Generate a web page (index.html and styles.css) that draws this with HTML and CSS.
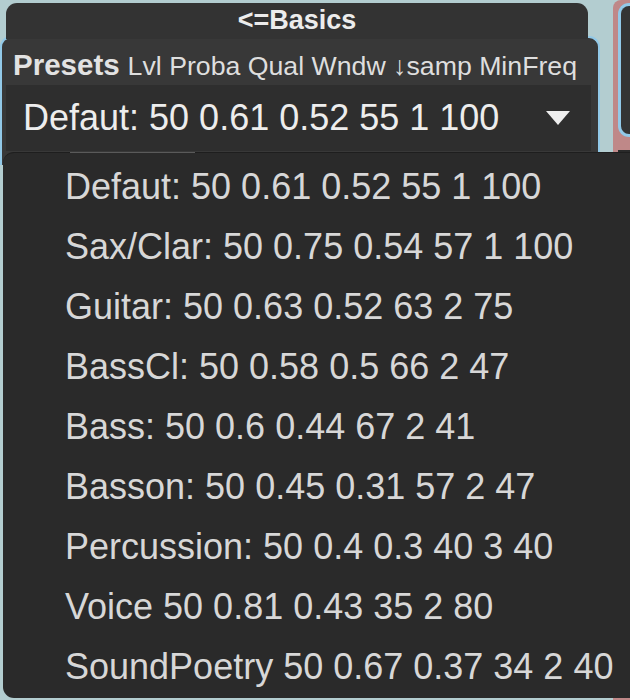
FILE: index.html
```html
<!DOCTYPE html>
<html>
<head>
<meta charset="utf-8">
<link rel="stylesheet" href="styles.css">
</head>
<body>
<div class="stage">
  <div class="main">
    <div class="tab">&lt;=Basics</div>
    <div class="panel">
      <div class="header"><span class="title">Presets</span><span class="cols">Lvl Proba Qual Wndw ↓samp MinFreq</span></div>
      <div class="select">
        <span class="value">Defaut: 50 0.61 0.52 55 1 100</span>
        <span class="arrow"></span>
      </div>
    </div>
  </div>
  <div class="side">
    <div class="side-inner"></div>
    <div class="side-foot"></div>
  </div>
  <ul class="menu">
    <li class="menu-line"></li>
    <li>Defaut: 50 0.61 0.52 55 1 100</li>
    <li>Sax/Clar: 50 0.75 0.54 57 1 100</li>
    <li>Guitar: 50 0.63 0.52 63 2 75</li>
    <li>BassCl: 50 0.58 0.5 66 2 47</li>
    <li>Bass: 50 0.6 0.44 67 2 41</li>
    <li>Basson: 50 0.45 0.31 57 2 47</li>
    <li>Percussion: 50 0.4 0.3 40 3 40</li>
    <li>Voice 50 0.81 0.43 35 2 80</li>
    <li>SoundPoetry 50 0.67 0.37 34 2 40</li>
  </ul>
</div>
</body>
</html>
```
FILE: styles.css
```css
html, body {
  margin: 0;
  padding: 0;
}
body {
  background: #b3cdd0;
  font-family: "Liberation Sans", Arial, Helvetica, sans-serif;
}
.stage {
  position: relative;
  width: 630px;
  height: 700px;
  overflow: hidden;
  display: flex;
  background: #b3cdd0;
}
.main {
  width: 613px;
  padding-top: 3px;
  box-sizing: border-box;
}
.tab {
  position: relative;
  z-index: 1;
  margin-left: 6px;
  width: 582px;
  height: 36px;
  background: #333333;
  border-radius: 11px 11px 0 0;
  color: #ececec;
  font-weight: bold;
  font-size: 27px;
  line-height: 34px;
  text-align: center;
}
.panel {
  margin-top: -3px;
  width: 600px;
  box-sizing: border-box;
  background: #383838;
  border: 2px solid #92c9e8;
  border-bottom: none;
  border-radius: 11px 11px 0 0;
  padding-bottom: 14px;
}
.header {
  height: 47px;
  box-sizing: border-box;
  padding: 9px 0 0 11px;
  line-height: 36px;
  color: #dedede;
  white-space: nowrap;
}
.title {
  font-weight: bold;
  font-size: 29.5px;
  color: #e2e2e2;
  margin-right: 8px;
}
.cols {
  font-size: 26.7px;
}
.select {
  margin: 0 7px 0 4px;
  height: 66px;
  background: #2e2e2e;
  display: flex;
  align-items: center;
  padding-left: 17px;
}
.value {
  font-size: 36px;
  color: #ededed;
  white-space: nowrap;
}
.arrow {
  margin-left: auto;
  margin-right: 21px;
  width: 0;
  height: 0;
  border-left: 12.5px solid transparent;
  border-right: 12.5px solid transparent;
  border-top: 14px solid #eeeeee;
}
.side {
  flex: 1;
  background: #bf8888;
  padding-left: 5px;
  padding-top: 3px;
  border-radius: 8px 0 0 0;
}
.side-inner {
  height: 128px;
  background: #343434;
  border: 3px solid #92c9e8;
  border-right: none;
  border-radius: 11px 0 0 11px;
}
.side-foot {
  margin-top: 13px;
  height: 10px;
  background: #2a2a2a;
}
.menu {
  position: absolute;
  left: 3px;
  top: 152px;
  width: 640px;
  height: 546px;
  margin: 0;
  padding: 4px 0 0 62px;
  box-sizing: border-box;
  list-style: none;
  background: #2a2a2a;
  border-top: 1px solid #1e1e1e;
  border-radius: 11px 0 0 11px;
  z-index: 2;
}
.menu li {
  height: 60px;
  line-height: 60px;
  font-size: 36px;
  color: #d7d7d7;
  white-space: nowrap;
}
.menu li.menu-line {
  position: absolute;
  top: -1px;
  left: 67px;
  width: 125px;
  height: 1px;
  background: #5a5a5a;
}
```
